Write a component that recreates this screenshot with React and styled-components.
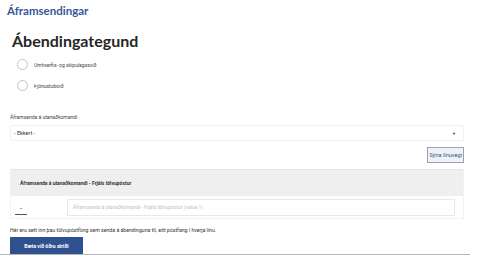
import React from 'react';
import styled, { createGlobalStyle } from 'styled-components';

const GlobalStyle = createGlobalStyle`
    body {
        margin: 0;
        background: #ffffff;
        font-family: Roboto, "Liberation Sans", sans-serif;
        color: #333;
    }
`;

const Page = styled.div`
    width: 480px;
    height: 261px;
    overflow: hidden;
    padding-top: 5px;
    box-sizing: border-box;
`;

const Brand = styled.div`
    font-family: Lato, "Open Sans", sans-serif;
    font-weight: 700;
    font-size: 11.5px;
    line-height: 12px;
    color: #35579a;
    padding-left: 7px;
`;

const Main = styled.div`
    margin-left: 10px;
    width: 454px;
`;

const Heading = styled.h1`
    margin: 14px 0 3px 2px;
    font-family: Lato, "Open Sans", sans-serif;
    font-weight: 700;
    font-size: 16px;
    line-height: 20px;
    color: #262626;
`;

const RadioList = styled.div`
    display: flex;
    flex-direction: column;
    padding-left: 7px;
`;

const RadioRow = styled.label`
    display: flex;
    align-items: center;
    gap: 6px;
    height: 21px;
    font-size: 5px;
    color: #444;
`;

const Circle = styled.span`
    width: 9px;
    height: 9px;
    border: 0.7px solid #c4c4c4;
    border-radius: 50%;
    background: #fff;
`;

const FieldLabel = styled.div`
    margin-top: 17px;
    font-size: 5px;
    line-height: 8px;
    color: #444;
`;

const Select = styled.div`
    margin-top: 4px;
    height: 16px;
    border: 1px solid #f0f0f0;
    border-radius: 2px;
    display: flex;
    align-items: center;
    justify-content: space-between;
    padding: 0 7px 0 3px;
    box-sizing: border-box;
    font-size: 5.5px;
    color: #333;
`;

const Arrow = styled.span`
    font-size: 4px;
    color: #333;
`;

const ButtonRow = styled.div`
    display: flex;
    justify-content: flex-end;
    margin-top: 6px;
`;

const SmallButton = styled.button`
    all: unset;
    height: 16px;
    padding: 0 1px;
    border: 1px solid #9aa3b5;
    background: #eef1f6;
    font-size: 5.6px;
    color: #3a5590;
    display: flex;
    align-items: center;
    box-sizing: border-box;
`;

const Panel = styled.div`
    margin-top: 6px;
    border: 1px solid #f2f2f2;
    border-top-color: #e6e6e6;
`;

const PanelHeader = styled.div`
    height: 26px;
    background: #efefef;
    display: flex;
    align-items: center;
    padding-left: 9px;
    font-size: 5px;
    font-weight: 700;
    color: #333;
`;

const PanelRow = styled.div`
    display: flex;
    align-items: center;
    height: 22px;
    padding: 0 8px 0 4px;
`;

const Handle = styled.div`
    width: 12px;
    height: 14px;
    border-bottom: 1px solid #555;
    display: flex;
    align-items: center;
    justify-content: center;
    font-size: 7px;
    font-weight: 700;
    color: #333;
    margin-right: 40px;
`;

const Input = styled.div`
    flex: 1;
    height: 15px;
    border: 1px solid #e8e8e8;
    display: flex;
    align-items: center;
    padding-left: 5px;
    font-size: 5px;
    color: #c2c2c2;
`;

const HelpText = styled.div`
    margin-top: 7px;
    font-size: 5.2px;
    line-height: 8px;
    color: #333;
`;

const AddButton = styled.button`
    all: unset;
    margin-top: 3px;
    height: 17px;
    width: 73px;
    background: #2f5190;
    color: #fff;
    font-size: 5px;
    font-weight: 700;
    display: flex;
    align-items: center;
    justify-content: center;
`;

const BottomLine = styled.div`
    width: 470px;
    height: 1px;
    background: #b5b8bd;
`;

const App = () => {
    return (
        <Page>
            <GlobalStyle />
            <Brand>Áframsendingar</Brand>
            <Main>
                <Heading>Ábendingategund</Heading>
                <RadioList>
                    <RadioRow><Circle />Umhverfis- og skipulagssvið</RadioRow>
                    <RadioRow><Circle />Þjónustuborð</RadioRow>
                </RadioList>
                <FieldLabel>Áframsenda á utanaðkomandi</FieldLabel>
                <Select>
                    <span>- Ekkert -</span>
                    <Arrow>▼</Arrow>
                </Select>
                <ButtonRow>
                    <SmallButton>Sýna línuvegi</SmallButton>
                </ButtonRow>
                <Panel>
                    <PanelHeader>Áframsenda á utanaðkomandi - Frjáls tölvupóstur</PanelHeader>
                    <PanelRow>
                        <Handle>.</Handle>
                        <Input>Áframsenda á utanaðkomandi - Frjáls tölvupóstur (value 1)</Input>
                    </PanelRow>
                </Panel>
                <HelpText>Hér eru sett inn þau tölvupóstföng sem senda á ábendinguna til, eitt póstfang í hverja línu.</HelpText>
                <AddButton>Bæta við öðru atriði</AddButton>
            </Main>
            <BottomLine />
        </Page>
    );
};

export default App;
